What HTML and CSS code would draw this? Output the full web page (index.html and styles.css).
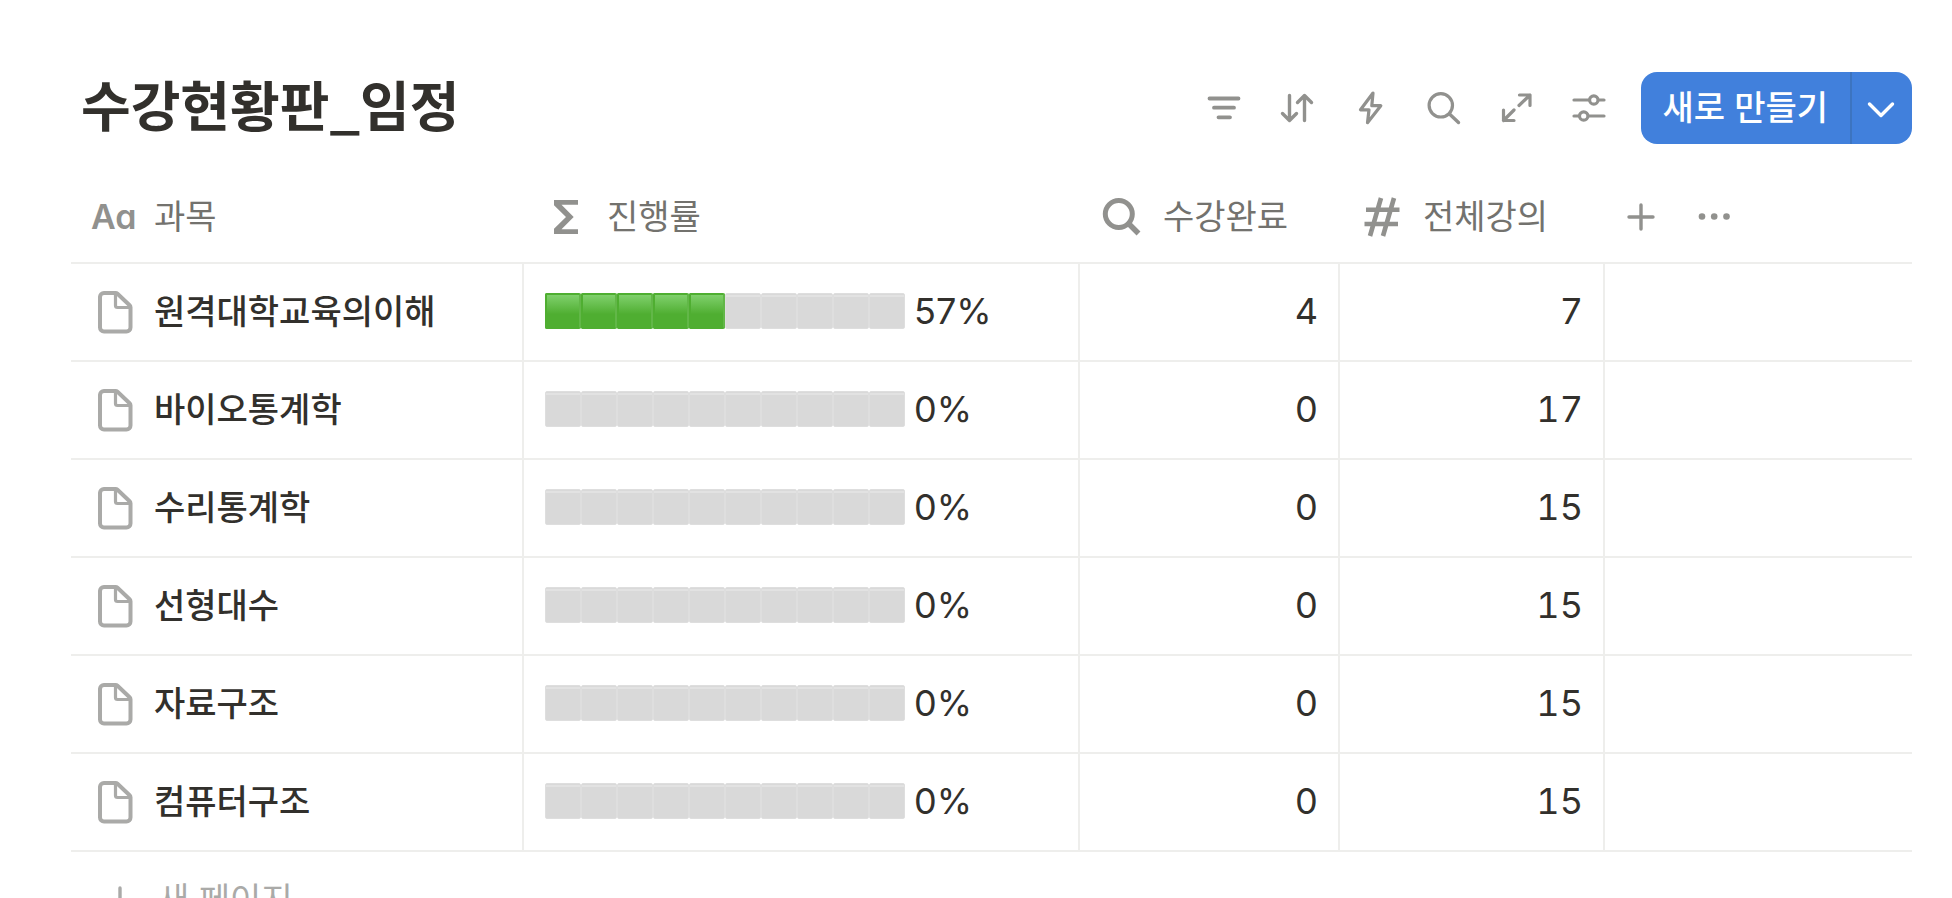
FILE: index.html
```
<!DOCTYPE html>
<html lang="ko">
<head>
    <meta charset="UTF-8">
    <meta name="viewport" content="width=device-width, initial-scale=1.0">
    <title>수강현황판_임정</title>
    <link rel="stylesheet" href="styles.css">
</head>
<body>
    <!-- shared icons -->
    <svg class="sprite" width="0" height="0">
        <symbol id="page" viewBox="0 0 46 46">
            <path d="M11 4h11.500a3 3 0 0 1 2 .8L36.600 16.300a3 3 0 0 1 .9 2V38.500a4 4 0 0 1-4 4H11a4 4 0 0 1-4-4V8a4 4 0 0 1 4-4z" fill="none" stroke="currentColor" stroke-width="4"/>
            <path d="M22.500 4v12.500a2 2 0 0 0 2 2H37" fill="none" stroke="currentColor" stroke-width="3.200"/>
        </symbol>
        <symbol id="plus" viewBox="0 0 40 40">
            <path d="M20 8v24M8 20h24" fill="none" stroke="currentColor" stroke-width="3.400" stroke-linecap="round"/>
        </symbol>
    </svg>

    <header class="topbar">
        <h1>수강현황판_임정</h1>
        <div class="tools">
            <button class="icon-btn" aria-label="필터">
                <svg viewBox="0 0 40 40"><path d="M6.500 10.500h29M11 19.700h20M15.500 29.300h11.500" stroke-width="3.800"/></svg>
            </button>
            <button class="icon-btn" aria-label="정렬">
                <svg viewBox="0 0 40 40"><path d="M13.500 7.500v25M6.500 25.500l7 7 7-7M28.500 32.500v-25M21.500 14.500l7-7 7 7" stroke-width="3.400"/></svg>
            </button>
            <button class="icon-btn" aria-label="자동화">
                <svg viewBox="0 0 40 40"><path d="M24 5L11.500 21.800h8.500L18.500 34.700 31.800 17.700h-9z" stroke-width="3.200"/></svg>
            </button>
            <button class="icon-btn" aria-label="검색">
                <svg viewBox="0 0 40 40"><circle cx="18.800" cy="17.300" r="11.700" stroke-width="3.200"/><path d="M27.500 26l9 8.500" stroke-width="3.400"/></svg>
            </button>
            <button class="icon-btn" aria-label="전체 보기">
                <svg viewBox="0 0 40 40"><path d="M24 17.500L35 7M24.500 7H35v10.500M19 22L8.500 32.500M8.500 22v10.500H19" stroke-width="3.200"/></svg>
            </button>
            <button class="icon-btn" aria-label="설정">
                <svg viewBox="0 0 40 40"><path d="M6 12h15M30.500 12H36M6 28h5M20.500 28H36" stroke-width="3.200"/><circle cx="25.800" cy="12" r="4.200" stroke-width="3.200"/><circle cx="15.700" cy="28" r="4.200" stroke-width="3.200"/></svg>
            </button>
            <div class="new-group">
                <button class="new-btn">새로 만들기</button>
                <button class="new-more" aria-label="더 보기">
                    <svg viewBox="0 0 40 40"><path d="M7.500 16l11.500 11.500L30.500 16" stroke-width="3.400"/></svg>
                </button>
            </div>
        </div>
    </header>

    <table class="board">
        <colgroup>
            <col class="col-name">
            <col class="col-progress">
            <col class="col-done">
            <col class="col-total">
            <col>
        </colgroup>
        <thead>
            <tr>
                <th><div class="head head-name"><span class="aa">Aa</span>과목</div></th>
                <th><div class="head">
                    <svg viewBox="0 0 40 40"><path d="M9 3h24v4.700H16.500L28.700 20 16.500 32.300H33V37H9v-5.300L21 20 9 8.300z" fill="currentColor"/></svg>진행률</div></th>
                <th><div class="head">
                    <svg viewBox="0 0 40 40"><g fill="none" stroke="currentColor"><circle cx="17.800" cy="17" r="13.500" stroke-width="5"/><path d="M27 26L37.500 36.500" stroke-width="5.500"/></g></svg>수강완료</div></th>
                <th><div class="head">
                    <svg viewBox="0 0 40 40"><path d="M20 1L9 39M33 1L22 39M5 12.700h33.500M3.500 27H37" fill="none" stroke="currentColor" stroke-width="4.600"/></svg>전체강의</div></th>
                <th><div class="head-tools">
                    <button class="icon-btn" aria-label="속성 추가"><svg><use href="#plus"/></svg></button>
                    <button class="icon-btn" aria-label="더 보기"><svg viewBox="0 0 40 40"><g class="dots"><circle cx="8" cy="19.500" r="3.300"/><circle cx="20.200" cy="19.500" r="3.300"/><circle cx="32.500" cy="19.500" r="3.300"/></g></svg></button>
                </div></th>
            </tr>
        </thead>
        <tbody id="rows"></tbody>
    </table>
    <button class="new-page"><svg><use href="#plus"/></svg>새 페이지</button>

    <script>
        const courses = [
            { name: "원격대학교육의이해", done: 4, total: 7 },
            { name: "바이오통계학", done: 0, total: 17 },
            { name: "수리통계학", done: 0, total: 15 },
            { name: "선형대수", done: 0, total: 15 },
            { name: "자료구조", done: 0, total: 15 },
            { name: "컴퓨터구조", done: 0, total: 15 }
        ];

        const rows = document.getElementById("rows");

        courses.forEach((course) => {
            const ratio = course.done / course.total;
            const filled = Math.floor(ratio * 10);
            let blocks = "";
            for (let i = 0; i < 10; i++) {
                blocks += `<span class="block${i < filled ? " on" : ""}"></span>`;
            }

            rows.insertAdjacentHTML("beforeend", `<tr>
                <td><div class="name"><svg><use href="#page"/></svg>${course.name}</div></td>
                <td><div class="progress"><div class="blocks">${blocks}</div>${Math.round(ratio * 100)}%</div></td>
                <td class="num">${course.done}</td>
                <td class="num">${course.total}</td>
                <td></td>
            </tr>`);
        });
    </script>
</body>
</html>
```
FILE: styles.css
```
* { box-sizing: border-box; }

body {
    margin: 0;
    height: 100vh;
    overflow: hidden;
    padding: 72px 40px 0 71px;
    background: white;
    color: #32302c;
    font-family: Inter, "Noto Sans CJK KR", sans-serif;
    font-size: 34px;
    line-height: 48px;
}

button {
    border: none;
    margin: 0;
    padding: 0;
    background: none;
    font: inherit;
    color: inherit;
    cursor: pointer;
}

svg { display: block; flex: none; }
.sprite { position: absolute; }

/* title and toolbar */
.topbar {
    display: flex;
    justify-content: space-between;
    align-items: center;
    height: 72px;
}
h1 {
    margin: 0;
    padding: 0 0 8px 10px;
    font-family: "Noto Sans CJK KR", sans-serif;
    font-size: 54px;
    line-height: 72px;
    font-weight: 700;
    white-space: nowrap;
}
.tools { display: flex; align-items: center; gap: 33px; }
.icon-btn { width: 40px; height: 40px; color: #91918e; }
.icon-btn svg { width: 40px; height: 40px; }
.tools svg {
    fill: none;
    stroke: currentColor;
    stroke-linecap: round;
    stroke-linejoin: round;
}
.new-group {
    display: flex;
    height: 72px;
    border-radius: 16px;
    overflow: hidden;
    background: #4180dc;
    color: white;
}
.new-btn { padding: 0 22px; font-weight: 500; white-space: nowrap; }
.new-more { width: 62px; padding: 0 10px; border-left: 2px solid #3c74c0; }
.new-more svg { width: 40px; height: 40px; }

/* table */
.board {
    width: 100%;
    margin-top: 28px;
    table-layout: fixed;
    border-collapse: separate;
    border-spacing: 0;
}
.col-name { width: 453px; }
.col-progress { width: 556px; }
.col-done { width: 260px; }
.col-total { width: 265px; }

th, td { padding: 0; border-bottom: 2px solid #eeeeec; }
th { height: 92px; font-weight: 400; text-align: left; color: #73726e; }
td { height: 98px; border-right: 2px solid #eeeeec; }
td:last-child { border-right: none; }

.head { display: flex; align-items: center; gap: 22px; padding-left: 21px; }
.head svg { width: 40px; height: 40px; color: #91918e; }
.head-name { gap: 17px; padding-left: 20px; }
.aa {
    width: 46px;
    color: #91918e;
    font-weight: 600;
    font-feature-settings: "cv11";
}
.head-tools { display: flex; gap: 33px; padding-left: 16px; }
.dots { fill: currentColor; }

.name {
    display: flex;
    align-items: center;
    gap: 15px;
    padding-left: 22px;
    font-weight: 500;
}
.name svg { width: 46px; height: 46px; color: #aaaaa8; }

.progress {
    display: flex;
    align-items: center;
    gap: 9px;
    padding: 0 0 2px 21px;
    font-size: 36px;
}
.blocks { display: flex; }
.block {
    width: 36px;
    height: 36px;
    border: 1px solid #dedede;
    border-radius: 2px;
    background: linear-gradient(#d9d9d9 1px, #e2e2e2 1px, #e2e2e2 3px, #d9d9d9 3px);
}
.block.on {
    border: 2px solid #4fae31;
    border-right-color: #62b748;
    background: linear-gradient(#7fd06c, #4fae31 60%);
}
.num {
    padding: 0 20px 2px 0;
    text-align: right;
    font-size: 36px;
    font-variant-numeric: tabular-nums;
}

.new-page {
    display: flex;
    align-items: center;
    gap: 18px;
    height: 96px;
    padding-left: 29px;
    color: #aaaaa8;
}
.new-page svg { width: 40px; height: 40px; }
```
